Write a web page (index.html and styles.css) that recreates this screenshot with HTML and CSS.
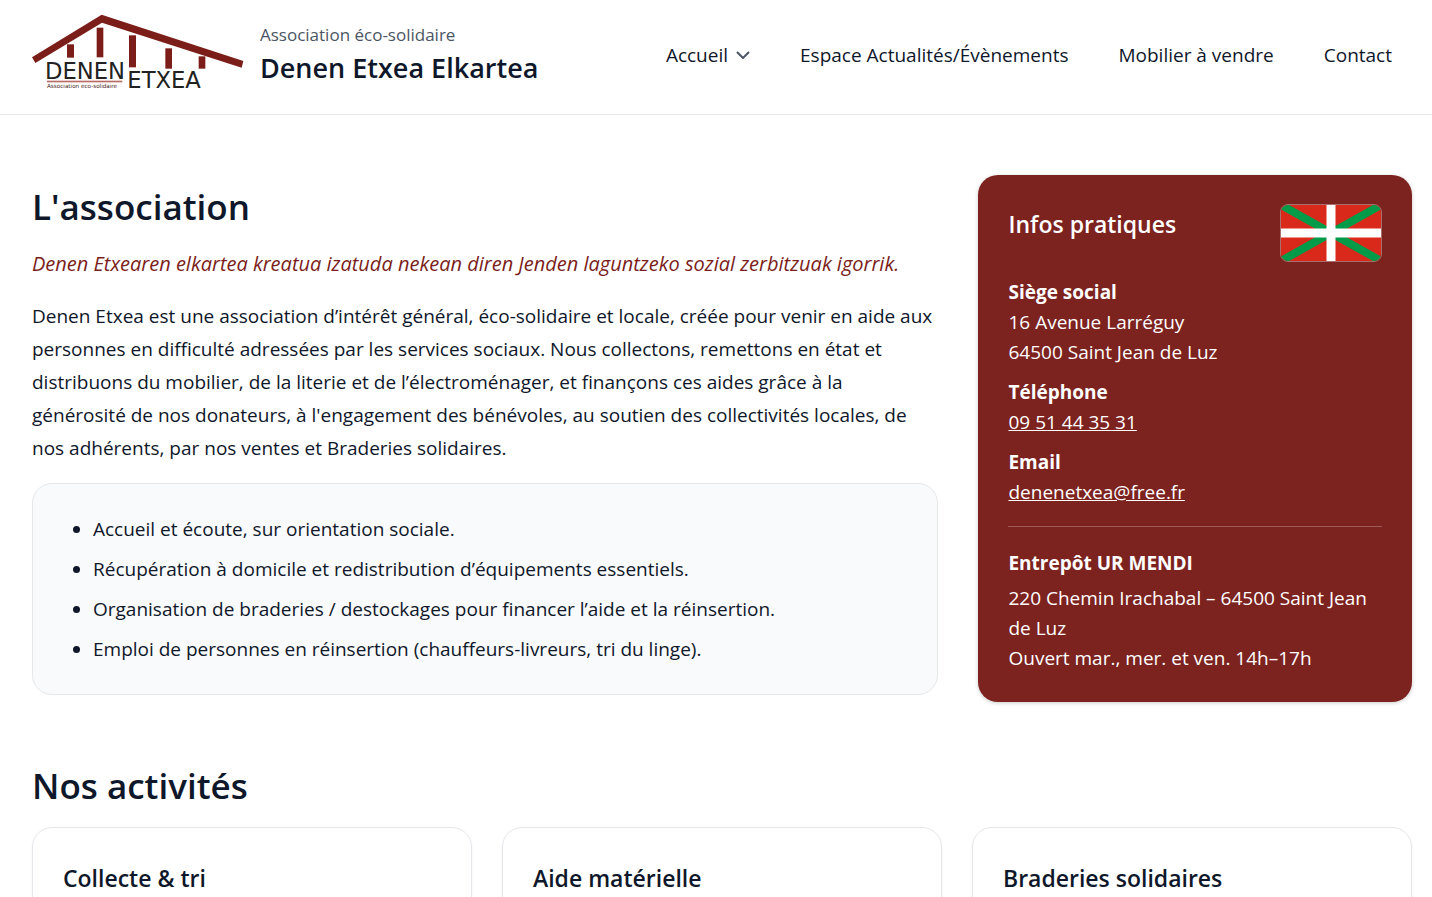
FILE: index.html
```html
<!DOCTYPE html>
<html lang="fr">
<head>
    <meta charset="UTF-8">
    <meta name="viewport" content="width=device-width, initial-scale=1.0">
    <title>Denen Etxea Elkartea</title>
    <link rel="stylesheet" href="styles.css">
</head>
<body>
    <header class="site-header">
        <a class="brand" href="#">
            <svg class="brand-logo" viewBox="38 40 636 234" role="img" aria-label="Denen Etxea">
                <path class="roof" d="M38 170 L247 42 L672 181 L667 201 L248 66 L48 187 Z"/>
                <g class="roof">
                    <rect x="143" y="131" width="21" height="40"/>
                    <rect x="232" y="81" width="20" height="89"/>
                    <rect x="329" y="104" width="21" height="96"/>
                    <rect x="438" y="143" width="20" height="61"/>
                    <rect x="538" y="167" width="20" height="37"/>
                </g>
                <text class="logo-word" x="77" y="235">DENEN</text>
                <text class="logo-word" x="324" y="263">ETXEA</text>
                <rect class="logo-line" x="83" y="240" width="226" height="5"/>
                <text class="logo-small" x="83" y="262">Association eco-solidaire</text>
            </svg>
            <span class="brand-text">
                <span class="brand-sub">Association éco-solidaire</span>
                <span class="brand-name">Denen Etxea Elkartea</span>
            </span>
        </a>

        <nav class="nav">
            <a href="#">Accueil
                <svg class="chevron" viewBox="0 0 14 8" aria-hidden="true"><path d="M1 1 L7 7 L13 1"/></svg>
            </a>
            <a href="#actualites">Espace Actualités/Évènements</a>
            <a href="#mobilier">Mobilier à vendre</a>
            <a href="#contact">Contact</a>
        </nav>
    </header>

    <main class="container">
        <section class="intro">
            <div class="intro-text">
                <h1>L'association</h1>
                <p class="lead">Denen Etxearen elkartea kreatua izatuda nekean diren Jenden laguntzeko sozial zerbitzuak igorrik.</p>
                <p class="description">Denen Etxea est une association d’intérêt général, éco-solidaire et locale, créée pour venir en aide aux personnes en difficulté adressées par les services sociaux. Nous collectons, remettons en état et distribuons du mobilier, de la literie et de l’électroménager, et finançons ces aides grâce à la générosité de nos donateurs, à l'engagement des bénévoles, au soutien des collectivités locales, de nos adhérents, par nos ventes et Braderies solidaires.</p>
                <ul class="missions">
                    <li>Accueil et écoute, sur orientation sociale.</li>
                    <li>Récupération à domicile et redistribution d’équipements essentiels.</li>
                    <li>Organisation de braderies / destockages pour financer l’aide et la réinsertion.</li>
                    <li>Emploi de personnes en réinsertion (chauffeurs-livreurs, tri du linge).</li>
                </ul>
            </div>

            <aside class="infos" id="contact">
                <div class="infos-head">
                    <h2>Infos pratiques</h2>
                    <svg class="flag" viewBox="0 0 100 56" preserveAspectRatio="none" role="img" aria-label="Ikurriña">
                        <rect width="100" height="56" fill="#d8291b"/>
                        <path d="M0 0 L100 56 M100 0 L0 56" stroke="#009b48" stroke-width="8"/>
                        <path d="M50 0 V56 M0 28 H100" stroke="#fff" stroke-width="9"/>
                    </svg>
                </div>
                <p><strong>Siège social</strong><br>16 Avenue Larréguy<br>64500 Saint Jean de Luz</p>
                <p><strong>Téléphone</strong><br><a href="tel:0951443531">09 51 44 35 31</a></p>
                <p><strong>Email</strong><br><a href="mailto:denenetxea@free.fr">denenetxea@free.fr</a></p>
                <hr>
                <h3>Entrepôt UR MENDI</h3>
                <p>220 Chemin Irachabal – 64500 Saint Jean de Luz<br>Ouvert mar., mer. et ven. 14h–17h</p>
            </aside>
        </section>

        <section class="activities">
            <h2>Nos activités</h2>
            <div class="cards">
                <article class="card"><h3>Collecte &amp; tri</h3></article>
                <article class="card"><h3>Aide matérielle</h3></article>
                <article class="card"><h3>Braderies solidaires</h3></article>
            </div>
        </section>
    </main>
</body>
</html>
```
FILE: styles.css
```css
* {
    box-sizing: border-box;
}

body {
    margin: 0;
    font-family: "Segoe UI", "Open Sans", "Noto Sans", sans-serif;
    font-size: 19px;
    line-height: 30px;
    color: #0f172a;
    background: #fff;
}

h1, h2, h3, p, ul {
    margin: 0;
}

h1, h2, h3, .brand-name {
    font-weight: 600;
}

a {
    color: inherit;
}

/* Header */
.site-header {
    display: flex;
    justify-content: space-between;
    align-items: center;
    padding: 12px 20px 12px 32px;
    min-height: 115px;
    border-bottom: 1px solid #e5e7eb;
}

.brand {
    display: flex;
    align-items: center;
    gap: 16px;
    padding-bottom: 8px;
    text-decoration: none;
}

.brand-logo {
    width: 212px;
    height: 78px;
}

.roof {
    fill: #7b1e1a;
}

.logo-word {
    font: 68px "DejaVu Sans", sans-serif;
    fill: #222;
}

.logo-small {
    font: 17px "DejaVu Sans", sans-serif;
    fill: #4a2522;
}

.logo-line {
    fill: #b96b66;
}

.brand-text {
    display: flex;
    flex-direction: column;
}

.brand-sub {
    font-size: 17px;
    color: #4b5563;
}

.brand-name {
    font-size: 27px;
    line-height: 36px;
}

.nav {
    display: flex;
    gap: 10px;
    padding-bottom: 4px;
}

.nav a {
    display: flex;
    align-items: center;
    gap: 8px;
    padding: 0 20px;
    text-decoration: none;
}

.chevron {
    width: 14px;
    height: 8px;
    fill: none;
    stroke: #4b5563;
    stroke-width: 2;
}

/* Contenu */
.container {
    padding: 60px 20px 60px 32px;
}

.intro {
    display: grid;
    grid-template-columns: 23fr 11fr;
    gap: 40px;
    align-items: start;
}

h1, .activities h2 {
    font-size: 35px;
    line-height: 48px;
}

h1 {
    padding-top: 8px;
}

.lead {
    margin-top: 18px;
    font-size: 20px;
    font-style: italic;
    color: #7b1e1a;
}

.description {
    margin-top: 21px;
    line-height: 33px;
}

.missions {
    display: flex;
    flex-direction: column;
    gap: 10px;
    margin-top: 18px;
    padding: 30px 30px 30px 60px;
    background: #f9fafb;
    border: 1px solid #e5e7eb;
    border-radius: 20px;
}

/* Bloc infos */
.infos {
    padding: 29px 30px;
    color: #fff;
    background: #7c221f;
    border-radius: 20px;
    box-shadow: 0 1px 4px rgba(0, 0, 0, 0.2);
}

.infos-head {
    display: flex;
    justify-content: space-between;
    align-items: flex-start;
    margin-bottom: 15px;
}

.infos h2, .card h3 {
    font-size: 23px;
    line-height: 40px;
}

.flag {
    width: 102px;
    height: 58px;
    border: 1px solid rgba(255, 255, 255, 0.35);
    border-radius: 8px;
}

.infos p + p {
    margin-top: 10px;
}

.infos hr {
    margin: 19px 0 21px;
    border: 0;
    border-top: 1px solid rgba(255, 255, 255, 0.25);
}

.infos h3 {
    margin-bottom: 5px;
    font-size: 19px;
    font-weight: 700;
}

/* Activités */
.activities {
    margin-top: 60px;
}

.cards {
    display: grid;
    grid-template-columns: repeat(3, 1fr);
    gap: 30px;
    margin-top: 17px;
}

.card {
    padding: 30px;
    border: 1px solid #e5e7eb;
    border-radius: 20px;
    box-shadow: 0 1px 3px rgba(0, 0, 0, 0.05);
}
```
